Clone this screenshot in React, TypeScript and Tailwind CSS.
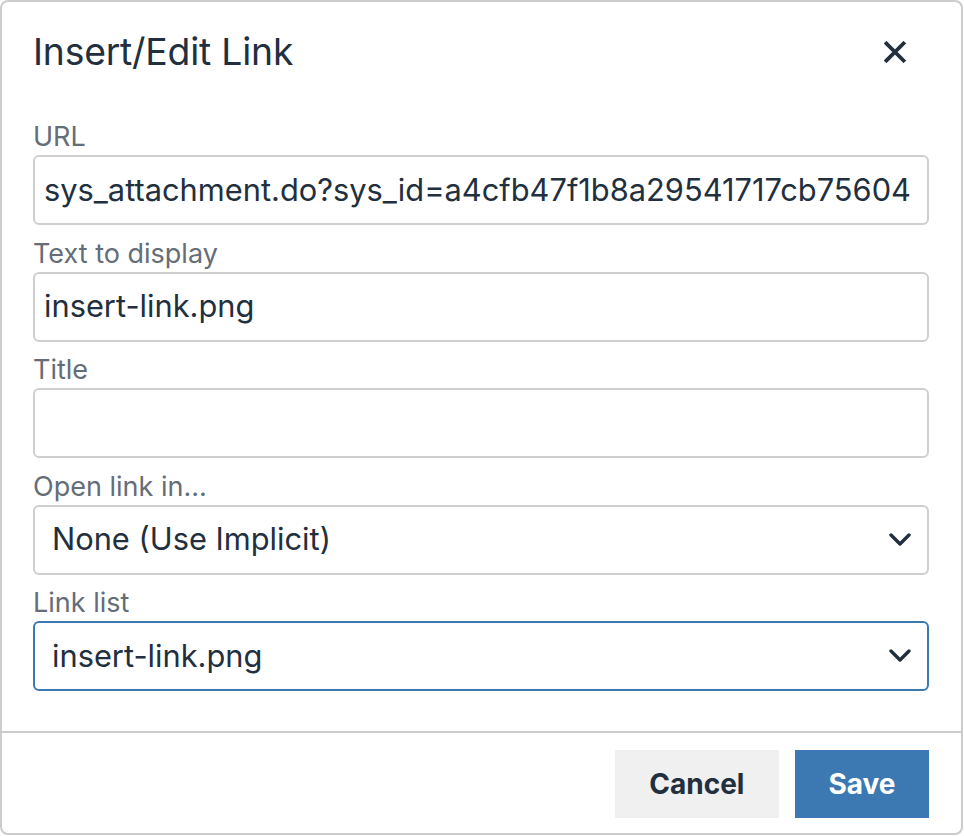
import React from 'react';

const labelCls = 'h-[36px] leading-[36px] text-[27px] text-[#646d78]';

function Field({ label, children }: { label: string; children: React.ReactNode }) {
  return (
    <div className="flex flex-col">
      <div className={labelCls}>{label}</div>
      {children}
    </div>
  );
}

function TextInput({ value }: { value?: string }) {
  return (
    <div className="h-[70px] border-2 border-[#cfcfcf] rounded-[6px] bg-white flex items-center pl-[9px] pr-[6px] overflow-hidden">
      <span className="whitespace-nowrap text-[30.8px] text-[#222f3e]">{value}</span>
    </div>
  );
}

function Chevron() {
  return (
    <svg width="22" height="14" viewBox="0 0 22 14" fill="none" className="shrink-0">
      <polyline points="2,2 11,11 20,2" stroke="#222f3e" strokeWidth="3.4" strokeLinecap="round" strokeLinejoin="round" />
    </svg>
  );
}

function SelectBox({ value, focused }: { value: string; focused?: boolean }) {
  return (
    <div
      className={
        focused
          ? 'h-[70px] border-2 border-[#3d78b1] rounded-[6px] bg-white flex items-center justify-between pl-[17px] pr-[16px]'
          : 'h-[70px] border-2 border-[#cfcfcf] rounded-[6px] bg-white flex items-center justify-between pl-[17px] pr-[16px]'
      }
    >
      <span className="whitespace-nowrap text-[30.8px] text-[#222f3e]">{value}</span>
      <Chevron />
    </div>
  );
}

export default function App() {
  return (
    <div className="min-h-screen bg-white" style={{ fontFamily: 'Inter, "Noto Sans", sans-serif' }}>
      <div className="w-[963px] h-[835px] border-2 border-[#cccccc] rounded-[8px] bg-white flex flex-col overflow-hidden">
        {/* Header */}
        <div className="flex items-center justify-between pl-[31px] pr-[55px] pt-[22px]">
          <h1 className="h-[56px] leading-[56px] text-[37.3px] text-[#222f3e] tracking-[-0.2px]">Insert/Edit Link</h1>
          <button className="w-[22px] h-[22px] flex items-center justify-center">
            <svg width="22" height="22" viewBox="0 0 22 22" fill="none">
              <path d="M2.5 2.5 L19.5 19.5 M19.5 2.5 L2.5 19.5" stroke="#222f3e" strokeWidth="3.8" strokeLinecap="square" />
            </svg>
          </button>
        </div>

        {/* Body */}
        <div className="flex flex-col gap-[10.5px] pl-[31px] pr-[32px] pt-[39px] pb-[40px]">
          <Field label="URL">
            <TextInput value="sys_attachment.do?sys_id=a4cfb47f1b8a29541717cb75604" />
          </Field>
          <Field label="Text to display">
            <TextInput value="insert-link.png" />
          </Field>
          <Field label="Title">
            <TextInput />
          </Field>
          <Field label="Open link in...">
            <SelectBox value="None (Use Implicit)" />
          </Field>
          <Field label="Link list">
            <SelectBox value="insert-link.png" focused />
          </Field>
        </div>

        {/* Footer */}
        <div className="border-t-2 border-[#cccccc] flex justify-end gap-[16px] pr-[32px] pt-[17px]">
          <button className="h-[68px] px-[34.5px] bg-[#f0f0f0] text-[28px] font-bold text-[#222f3e]">Cancel</button>
          <button className="h-[68px] px-[33.5px] bg-[#3c79b3] text-[28px] font-bold text-white">Save</button>
        </div>
      </div>
    </div>
  );
}
